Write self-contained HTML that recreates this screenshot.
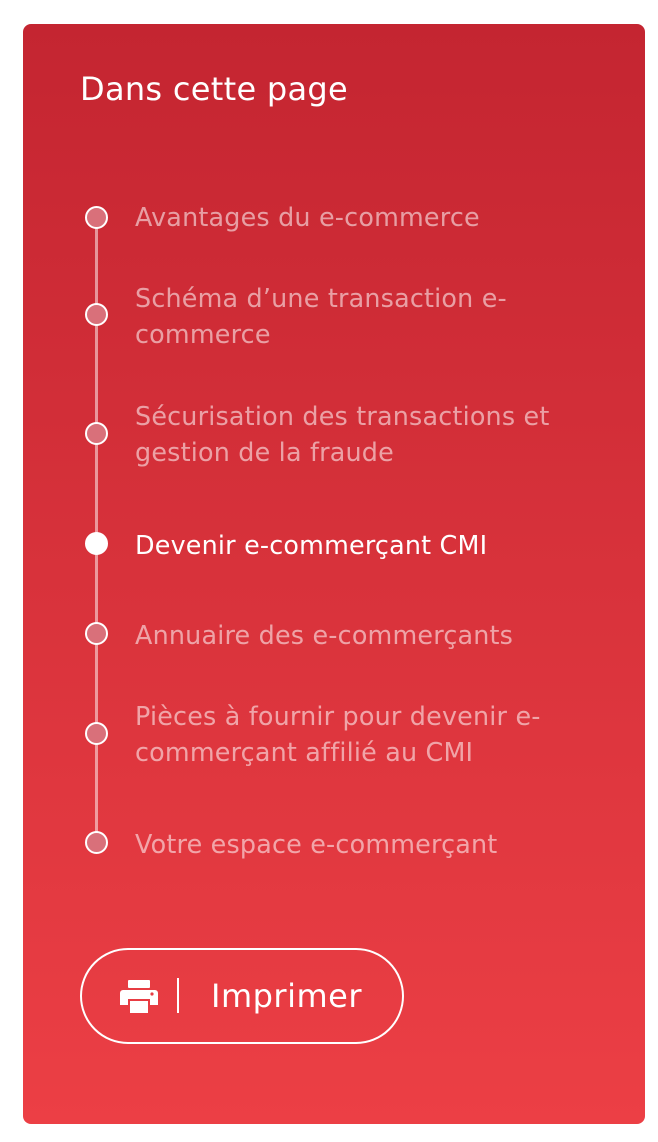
<!DOCTYPE html>
<html><head><meta charset="utf-8"><style>
html,body{margin:0;padding:0;background:#fff;width:658px;height:1142px;overflow:hidden}
body{font-family:"DejaVu Sans","Liberation Sans",sans-serif}
.panel{position:absolute;left:23px;top:24px;width:622px;height:1100px;border-radius:8px;background:linear-gradient(#c42531,#ec3f45)}
.title{position:absolute;left:80px;top:68px;font-size:32px;color:#fff;line-height:42px;letter-spacing:0.3px}
.line{position:absolute;left:95px;top:217px;width:3px;height:626px;background:rgba(255,255,255,.5)}
.dot{position:absolute;left:85px;width:19px;height:19px;border-radius:50%;border:2px solid #fff;background:#d9707a;box-sizing:content-box;margin-top:-11px}
.dot.on{background:#fff}
.t{position:absolute;left:135px;font-size:25.4px;line-height:36px;color:rgba(255,255,255,.55);width:470px;letter-spacing:0.2px}
.t.on{color:#fff}
.btn{position:absolute;left:80px;top:948px;width:320px;height:92px;border:2px solid #fff;border-radius:48px}
.sep{position:absolute;left:177px;top:978px;width:2px;height:35px;background:#fff}
.bt{position:absolute;left:211px;top:976px;font-size:32px;color:#fff;line-height:40px;letter-spacing:0.5px}
</style></head><body>
<div class="panel"></div>
<div class="title">Dans cette page</div>
<div class="line"></div>
<div class="dot" style="top:217px"></div><div class="t" style="top:199px">Avantages du e-commerce</div>
<div class="dot" style="top:314px"></div><div class="t" style="top:280px">Schéma d’une transaction e-<br>commerce</div>
<div class="dot" style="top:433px"></div><div class="t" style="top:398px">Sécurisation des transactions et<br>gestion de la fraude</div>
<div class="dot on" style="top:543px"></div><div class="t on" style="top:527px">Devenir e-commerçant CMI</div>
<div class="dot" style="top:633px"></div><div class="t" style="top:617px">Annuaire des e-commerçants</div>
<div class="dot" style="top:733px"></div><div class="t" style="top:698px">Pièces à fournir pour devenir e-<br>commerçant affilié au CMI</div>
<div class="dot" style="top:842px"></div><div class="t" style="top:826px">Votre espace e-commerçant</div>
<div class="btn"></div>
<svg style="position:absolute;left:120px;top:980px" width="38" height="33" viewBox="0 0 38 33">
<rect x="8" y="0" width="22" height="8" rx="1" fill="#fff"/>
<path d="M3 10h32a3 3 0 0 1 3 3v12h-8v-6H8v6H0V13a3 3 0 0 1 3-3z" fill="#fff"/>
<circle cx="32" cy="14" r="1.6" fill="#e73c43"/>
<rect x="10" y="21" width="18" height="12" fill="#fff"/>
</svg>
<div class="sep"></div>
<div class="bt">Imprimer</div>
</body></html>
